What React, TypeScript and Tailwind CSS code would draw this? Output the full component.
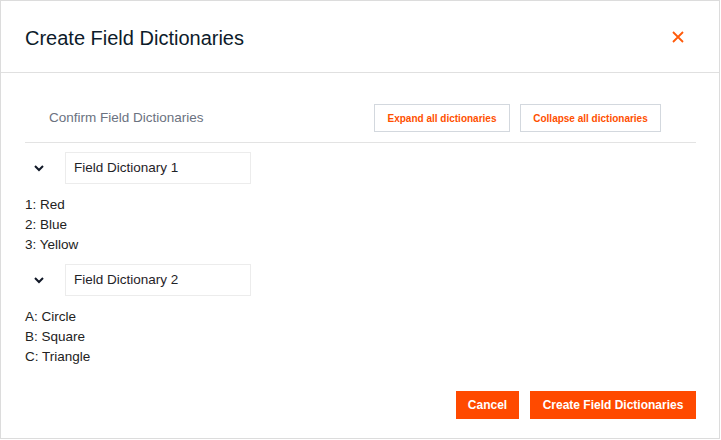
import React from 'react';

interface Dictionary {
  name: string;
  values: string[];
}

const dictionaries: Dictionary[] = [
  { name: 'Field Dictionary 1', values: ['1: Red', '2: Blue', '3: Yellow'] },
  { name: 'Field Dictionary 2', values: ['A: Circle', 'B: Square', 'C: Triangle'] },
];

function Chevron() {
  return (
    <svg width="12" height="8" viewBox="0 0 12 8" fill="none">
      <path d="M2 2l4 4 4-4" stroke="#111827" strokeWidth="2" />
    </svg>
  );
}

export default function App() {
  return (
    <div
      className="w-[720px] h-[439px] bg-white border border-[#dcdcdc] flex flex-col"
      style={{ fontFamily: '"Liberation Sans", Arial, sans-serif' }}
    >
      {/* Header */}
      <div className="h-[72px] shrink-0 border-b border-[#e0e0e0] flex items-center justify-between pl-6 pr-[34px]">
        <h2 className="text-[20px] text-[#0d1b2a] pt-[2px]">Create Field Dictionaries</h2>
        <button className="text-[#ff5000]">
          <svg width="14" height="14" viewBox="0 0 14 14" fill="none">
            <path d="M2 2l10 10M12 2L2 12" stroke="#ff5a0a" strokeWidth="1.8" />
          </svg>
        </button>
      </div>

      {/* Body */}
      <div className="flex-1 flex flex-col pt-[31px] px-6">
        <div className="flex items-center justify-between pl-6 pr-[35px] pb-[10px] border-b border-[#e3e3e3] mr-[-1px]">
          <span className="text-[13.5px] text-[#6b7280]">Confirm Field Dictionaries</span>
          <div className="flex gap-[10px]">
            <button className="h-[28px] w-[136px] border border-[#d3d8de] text-[10px] font-bold text-[#ff5000]">
              Expand all dictionaries
            </button>
            <button className="h-[28px] w-[141px] border border-[#d3d8de] text-[10px] font-bold text-[#ff5000]">
              Collapse all dictionaries
            </button>
          </div>
        </div>

        <div className="pt-[9px] flex flex-col gap-[9px]">
          {dictionaries.map((d) => (
            <div key={d.name} className="flex flex-col gap-[11px]">
              <div className="flex items-center">
                <div className="w-[40px] flex pl-[8px]">
                  <Chevron />
                </div>
                <div className="w-[186px] h-[32px] border border-[#ececec] flex items-center pl-[8px] text-[13.5px] text-[#1f2328]">
                  {d.name}
                </div>
              </div>
              <div className="flex flex-col">
                {d.values.map((v) => (
                  <div key={v} className="text-[13.5px] leading-[20px] text-[#222]">
                    {v}
                  </div>
                ))}
              </div>
            </div>
          ))}
        </div>

        <div className="flex-1" />
        <div className="flex justify-end gap-[11px] pb-[19px] mr-[-1px]">
          <button className="h-[28px] w-[63px] bg-[#ff4a00] text-white text-[12px] font-bold">Cancel</button>
          <button className="h-[28px] w-[166px] bg-[#ff4a00] text-white text-[12px] font-bold">
            Create Field Dictionaries
          </button>
        </div>
      </div>
    </div>
  );
}
